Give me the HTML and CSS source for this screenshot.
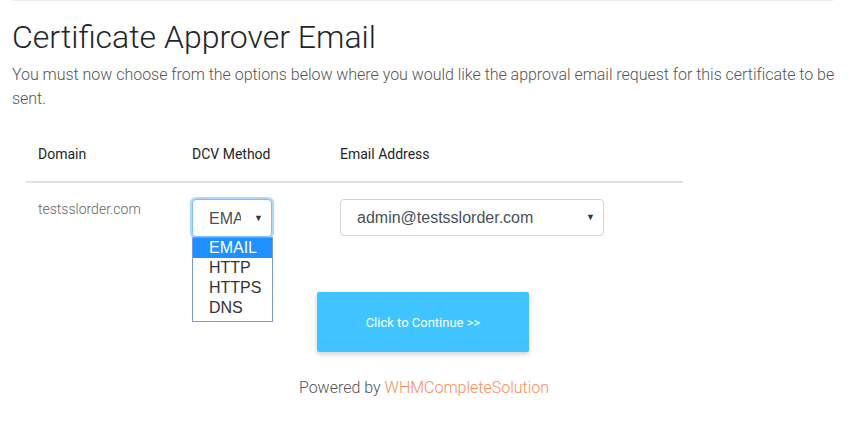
FILE: index.html
```html
<!DOCTYPE html>
<html>
<head>
<meta charset="utf-8">
<link rel="stylesheet" href="styles.css">
</head>
<body>
<div class="topline"></div>
<div class="container">
  <h1 class="title">Certificate Approver Email</h1>
  <p class="lead">You must now choose from the options below where you would like the approval email request for this certificate to be sent.</p>
  <table class="tbl">
    <thead>
      <tr><th class="c1">Domain</th><th class="c2">DCV Method</th><th class="c3">Email Address</th></tr>
    </thead>
    <tbody>
      <tr>
        <td class="domain">testsslorder.com</td>
        <td>
          <div class="dcv-wrap">
            <div class="sel sel-focus"><span class="sel-text">EMA</span><span class="arrow">▼</span></div>
            <ul class="dropdown">
              <li class="active">EMAIL</li>
              <li>HTTP</li>
              <li>HTTPS</li>
              <li>DNS</li>
            </ul>
          </div>
        </td>
        <td>
          <div class="sel sel-email"><span class="sel-text">admin@testsslorder.com</span><span class="arrow">▼</span></div>
        </td>
      </tr>
    </tbody>
  </table>
  <div class="actions">
    <button class="btn">Click to Continue &gt;&gt;</button>
  </div>
  <p class="powered">Powered by <span class="brand">WHMCompleteSolution</span></p>
</div>
</body>
</html>
```
FILE: styles.css
```css
html, body {
  margin: 0;
  padding: 0;
  background: #fff;
}
body {
  font-family: Roboto, "Liberation Sans", sans-serif;
  color: #212529;
}
.topline {
  height: 1px;
  background: #e9ecef;
  margin: 0 15px 0 13px;
}
.container {
  padding: 0 4px 0 12px;
}
.title {
  font-size: 32px;
  font-weight: 300;
  line-height: 38px;
  margin: 17px 0 0;
  color: #212529;
}
.lead {
  font-size: 16px;
  font-weight: 300;
  line-height: 24px;
  color: #555;
  margin: 7px 0 0;
  letter-spacing: -0.03px;
}
.tbl {
  margin: 17px 0 0 14px;
  width: 657px;
  border-collapse: collapse;
}
.tbl th {
  text-align: left;
  font-size: 14px;
  font-weight: 400;
  line-height: 21px;
  padding: 16px 12px;
  border-bottom: 2px solid #dee2e6;
  color: #212529;
}
.tbl td {
  vertical-align: top;
  padding: 16px 12px;
  font-size: 14px;
  line-height: 21px;
}
.c1 { width: 130px; }
.c2 { width: 124px; }
.tbl td.domain {
  color: #666;
  font-weight: 300;
}
.dcv-wrap {
  position: relative;
  width: 80px;
}
.sel {
  box-sizing: border-box;
  display: flex;
  align-items: center;
  height: 38px;
  border: 1px solid #ced4da;
  border-radius: 4px;
  font-family: "Liberation Sans", Arial, sans-serif;
  font-size: 16px;
  color: #495057;
  background: #fff;
  padding: 0 8px 0 16px;
}
.sel-focus {
  width: 80px;
  border-color: #80bdff;
  box-shadow: 0 0 0 2px rgba(0, 123, 255, 0.3);
}
.sel-focus .sel-text {
  width: 32px;
  overflow: hidden;
  white-space: nowrap;
  flex: none;
}
.sel-email {
  width: 264px;
  height: 37px;
}
.sel-text {
  flex: 1;
}
.arrow {
  font-size: 9px;
  color: #333;
  margin-left: auto;
}
.dropdown {
  position: absolute;
  top: 38px;
  left: 0;
  width: 81px;
  box-sizing: border-box;
  margin: 0;
  padding: 0 0 3px;
  list-style: none;
  background: #fff;
  border: 1px solid #7b9bd6;
  font-family: "Liberation Sans", Arial, sans-serif;
  font-size: 16px;
  line-height: 20px;
  color: #333;
  z-index: 2;
}
.dropdown li {
  padding-left: 16px;
  height: 20px;
}
.dropdown li.active {
  background: #1e90ff;
  color: #fff;
}
.actions {
  display: flex;
  justify-content: center;
  margin-top: 39px;
  padding-right: 10px;
}
.btn {
  width: 212px;
  height: 60px;
  border: none;
  border-radius: 2px;
  background: #40c4ff;
  color: #fff;
  font-family: Roboto, "Liberation Sans", sans-serif;
  font-size: 13px;
  font-weight: 400;
  box-shadow: 0 2px 5px rgba(0, 0, 0, 0.2);
}
.powered {
  text-align: center;
  font-size: 16px;
  font-weight: 300;
  color: #555;
  margin: 24px 0 0;
  padding-right: 8px;
  line-height: 24px;
}
.brand {
  color: #f98d5b;
}
```
